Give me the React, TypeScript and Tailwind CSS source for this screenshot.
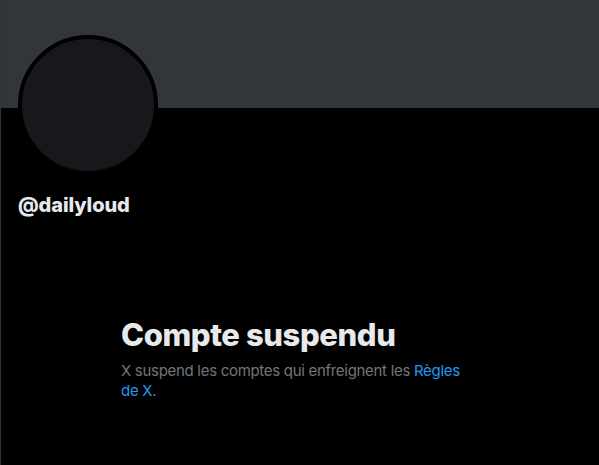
export default function App() {
  return (
    <div className="h-[465px] w-full overflow-hidden border-l border-[#2f3336] bg-black font-['Inter',sans-serif] text-[#e7e9ea]">
      {/* Banner */}
      <div className="h-[108px] bg-[#333639]" />

      {/* Avatar + handle */}
      <div className="pl-[17px]">
        <div className="-mt-[73px] h-[140px] w-[140px] rounded-full border-4 border-black bg-[#16181c]" />
        <div className="mt-[18px] text-[20px] font-extrabold leading-6 tracking-[-0.1px]">@dailyloud</div>
      </div>

      {/* Empty state */}
      <div className="ml-[120px] mt-[100px] w-[345px]">
        <h2 className="text-[31px] font-extrabold leading-9 tracking-[-0.4px]">Compte suspendu</h2>
        <div className="mt-[8px] text-[15px] leading-5 tracking-[-0.3px] text-[#71767b]">
          <p>
            X suspend les comptes qui enfreignent les <span className="text-[#1d9bf0]">Règles</span>
          </p>
          <p>
            <span className="text-[#1d9bf0]">de X</span>.
          </p>
        </div>
      </div>
    </div>
  );
}
